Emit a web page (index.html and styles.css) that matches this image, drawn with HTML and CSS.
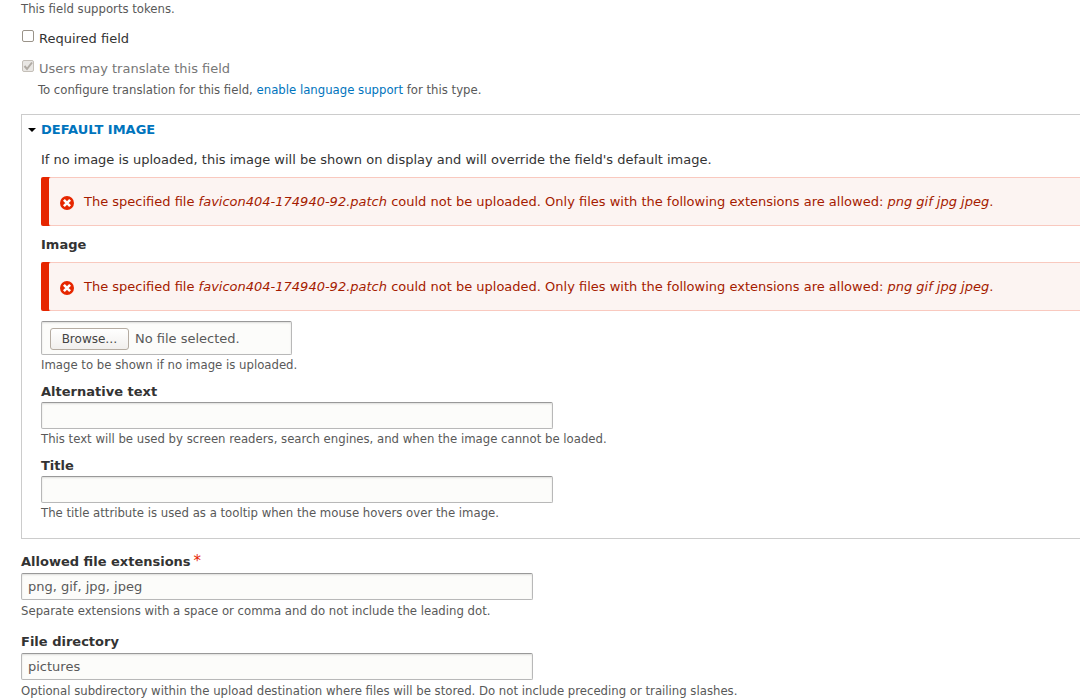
FILE: index.html
```html
<!DOCTYPE html>
<html lang="en">
<head>
  <meta charset="UTF-8">
  <meta name="viewport" content="width=device-width, initial-scale=1.0">
  <title>Image field settings</title>
  <link rel="stylesheet" href="styles.css">
</head>
<body>
  <form class="field-form">
    <div class="description">This field supports tokens.</div>

    <div class="check-item">
      <input type="checkbox" id="required">
      <label for="required">Required field</label>
    </div>
    <div class="check-item disabled">
      <input type="checkbox" id="translatable" checked disabled>
      <label for="translatable">Users may translate this field</label>
    </div>
    <div class="description indent">To configure translation for this field, <a href="#">enable language support</a> for this type.</div>

    <details class="default-image" open>
      <summary>Default image</summary>
      <div class="details-wrapper">
        <p>If no image is uploaded, this image will be shown on display and will override the field's default image.</p>

        <div class="message-error">
          <svg class="icon-error" viewBox="0 0 14 14" aria-hidden="true">
            <circle cx="7" cy="7" r="7" fill="#e62600"/>
            <path d="M3.9 3.9l6.2 6.2M10.1 3.9l-6.2 6.2" stroke="#fff" stroke-width="2.6"/>
          </svg>
          <span>The specified file <em>favicon404-174940-92.patch</em> could not be uploaded. Only files with the following extensions are allowed: <em>png gif jpg jpeg</em>.</span>
        </div>

        <div class="form-item upload-item">
          <label for="image">Image</label>
          <div class="message-error">
            <svg class="icon-error" viewBox="0 0 14 14" aria-hidden="true">
              <circle cx="7" cy="7" r="7" fill="#e62600"/>
              <path d="M3.9 3.9l6.2 6.2M10.1 3.9l-6.2 6.2" stroke="#fff" stroke-width="2.6"/>
            </svg>
            <span>The specified file <em>favicon404-174940-92.patch</em> could not be uploaded. Only files with the following extensions are allowed: <em>png gif jpg jpeg</em>.</span>
          </div>
          <div class="file-box">
            <button type="button" tabindex="-1">Browse…</button>
            <span>No file selected.</span>
            <input type="file" id="image">
          </div>
          <div class="description">Image to be shown if no image is uploaded.</div>
        </div>

        <div class="form-item">
          <label for="alt">Alternative text</label>
          <input type="text" class="form-text" id="alt">
          <div class="description">This text will be used by screen readers, search engines, and when the image cannot be loaded.</div>
        </div>

        <div class="form-item">
          <label for="title">Title</label>
          <input type="text" class="form-text" id="title">
          <div class="description">The title attribute is used as a tooltip when the mouse hovers over the image.</div>
        </div>
      </div>
    </details>

    <div class="form-item">
      <label for="extensions" class="form-required">Allowed file extensions</label>
      <input type="text" class="form-text" id="extensions" value="png, gif, jpg, jpeg" required>
      <div class="description">Separate extensions with a space or comma and do not include the leading dot.</div>
    </div>

    <div class="form-item">
      <label for="directory">File directory</label>
      <input type="text" class="form-text" id="directory" value="pictures">
      <div class="description">Optional subdirectory within the upload destination where files will be stored. Do not include preceding or trailing slashes.</div>
    </div>
  </form>
</body>
</html>
```
FILE: styles.css
```css
* {
  box-sizing: border-box;
}
body {
  margin: 0;
  background: #fff;
  color: #333;
  font-family: "DejaVu Sans", sans-serif;
  font-size: 13px;
  line-height: 20px;
}
.field-form {
  padding-left: 21px;
}
a {
  color: #0074bd;
  text-decoration: none;
}
a:hover {
  text-decoration: underline;
}
.description {
  color: #595959;
  font-family: "DejaVu Sans Condensed", "DejaVu Sans", sans-serif;
  font-size: 13px;
  line-height: 18px;
}

/* Checkboxes */
.check-item {
  display: flex;
  align-items: flex-start;
  gap: 5px;
  margin-top: 10px;
}
.check-item label {
  margin: 1px 0 -1px;
}
.check-item input {
  appearance: none;
  width: 12px;
  height: 12px;
  margin: 2px 0 0 1px;
  border: 1px solid #9a9389;
  border-radius: 2px;
  background: #fff;
}
.check-item input:checked {
  background: #e9e7e4 url("data:image/svg+xml,%3Csvg xmlns='http://www.w3.org/2000/svg' viewBox='0 0 10 10'%3E%3Cpath d='M1.5 5l2.5 3L9 1.5' fill='none' stroke='%23b0aba4' stroke-width='2'/%3E%3C/svg%3E") center / 10px no-repeat;
}
.check-item.disabled input {
  border-color: #c4bfb8;
}
.check-item.disabled label {
  color: #777;
}
.indent {
  margin: 3px 0 0 17px;
}

/* Collapsible group */
.default-image {
  margin: 15px 0 13px;
  border: 1px solid #ccc;
  border-right: 0;
}
.default-image summary {
  display: flex;
  align-items: center;
  gap: 5px;
  padding: 5px 6px;
  color: #0074bd;
  font-weight: bold;
  text-transform: uppercase;
  cursor: pointer;
}
.default-image summary::before {
  content: "";
  border: 4px solid transparent;
  border-top-color: #000;
  border-bottom: 0;
}
.details-wrapper {
  padding: 5px 0 8px 19px;
}
.details-wrapper p {
  margin: 0 0 7px;
}

/* Messages */
.message-error {
  display: flex;
  align-items: center;
  gap: 10px;
  padding: 14px 0 13px 11px;
  border: 1px solid #f9c9bf;
  border-width: 1px 0;
  border-radius: 2px 0 0 2px;
  background: #fcf4f2;
  box-shadow: -8px 0 0 #e62600;
  margin-left: 8px;
  color: #a51b00;
}
.icon-error {
  flex: none;
  width: 14px;
  height: 14px;
  margin-top: 2px;
}

/* Fields */
.form-item {
  margin-bottom: 12px;
}
.form-item label {
  display: block;
  margin-bottom: 1px;
  font-weight: bold;
}
.form-item .description {
  margin-top: 2px;
}
.details-wrapper .form-item {
  margin-bottom: 8px;
}
.details-wrapper .form-item label {
  margin-bottom: 0;
}
.details-wrapper .description {
  margin-top: 1px;
}
.form-required::after {
  content: "*";
  margin-left: 3px;
  color: #e62600;
  font-size: 15px;
  font-weight: normal;
  line-height: 1;
}
.form-text,
.file-box {
  border: 1px solid #b8b8b8;
  border-top-color: #999;
  border-radius: 2px;
  background: #fcfcfa;
  box-shadow: inset 0 1px 2px rgba(0, 0, 0, 0.125);
  color: #595959;
}
.form-text {
  display: block;
  width: 512px;
  max-width: 100%;
  height: 27px;
  padding: 0 6px;
  font: inherit;
}
.form-text:focus {
  border-color: #40b6ff;
  outline: 0;
}

/* File upload */
.details-wrapper .upload-item label {
  margin: 9px 0 7px;
}
.file-box {
  position: relative;
  display: flex;
  align-items: center;
  gap: 6px;
  width: 251px;
  margin-top: 10px;
  padding: 6px 8px;
}
.file-box button {
  width: 79px;
  height: 22px;
  padding: 0;
  border: 1px solid #b5aca2;
  border-radius: 3px;
  background: linear-gradient(#fff, #f1efed);
  color: #444;
  font: 12px "DejaVu Sans", sans-serif;
}
.file-box input {
  position: absolute;
  inset: 0;
  width: 100%;
  opacity: 0;
  cursor: pointer;
}
.file-box {
  padding-bottom: 4px;
}
```
